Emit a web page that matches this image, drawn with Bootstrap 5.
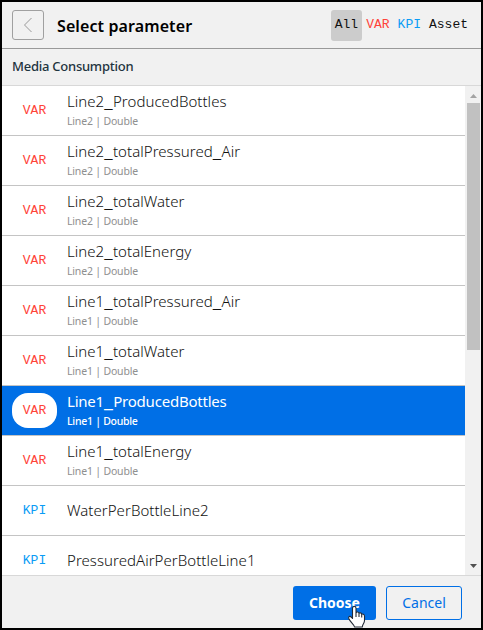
<!DOCTYPE html>
<html lang="en">
<head>
<meta charset="utf-8">
<meta name="viewport" content="width=device-width, initial-scale=1">
<title>Select parameter</title>
<link href="https://cdn.jsdelivr.net/npm/bootstrap@5.3.0/dist/css/bootstrap.min.css" rel="stylesheet">
<style>
body{font-family:"Noto Sans","Open Sans",sans-serif;font-size:14px;color:#333}
.dialog{width:483px;height:630px;border:2px solid #000;background:#f1f1f1}
.dialog-head{height:47px;border-bottom:1px solid #999;padding:0 9px 0 10px}
.back-btn{width:32px;height:30px;border:1px solid #a0a0a0;border-radius:3px;background:transparent}
.dialog-title{font-size:16px;font-weight:600;color:#000;margin:0 0 0 13px;padding-top:2px;line-height:22px;letter-spacing:.1px}
.mono{font-family:"Courier New","Liberation Mono",monospace;font-size:13px;line-height:16px}
.filter-btn{border:0;background:transparent;height:31px;padding:0 4px;border-radius:3px}
.filter-btn.current{background:#ccc}
.c-var{color:#ff4338}.c-kpi{color:#0a9cf5}.c-asset{color:#111}
.group-head{height:37px;border-bottom:1px solid #d8d8d8;padding-left:10px;font-size:13px;font-weight:500;color:#1e3440;letter-spacing:-.25px}
.list-wrap{height:489px}
.param{height:50px;border-bottom:1px solid #c4c4c4;padding-left:10px}
.tag{width:45px;height:35px;border-radius:16px}
.param-text{margin-left:10px;padding-bottom:3px}
.param-text.solo{padding-bottom:2px}
.param-name{font-size:15px;line-height:20px;font-weight:300;color:#111;letter-spacing:.04px}
.param-name i{font-style:normal;font-size:20px;line-height:0;letter-spacing:.4px}
.param-sub{font-size:10.5px;line-height:14px;color:#8f8f8f;margin-top:3px;letter-spacing:-.18px}
.param.selected{background:#006fe6}
.selected .tag{background:#fff}
.selected .param-name,.selected .param-sub{color:#fff;font-weight:400}
.selected .param-name{letter-spacing:-.22px}
.selected .param-sub{font-weight:500;letter-spacing:-.27px}
.scroll-track{width:16px;background:#f1f1f1;padding:8px 1px 7px 2px}
.thumb{height:247px;background:#c1c1c1;margin-top:5px}
.dialog-foot{height:53px;border-top:1px solid #d8d8d8;padding:1px 19px 0 0;gap:10px}
.dialog-foot .btn{height:34px;border-radius:3px;font-size:14px;padding:0;line-height:32px}
.btn-choose{width:83px;background:#006fe6;color:#fff;font-weight:700}
.btn-cancel{width:76px;border-color:#006fe6;color:#006fe6}
.cursor{left:345px;top:603px}
</style>
<script src="https://cdn.jsdelivr.net/npm/bootstrap@5.3.0/dist/js/bootstrap.bundle.min.js"></script>
</head>
<body class="overflow-hidden">
<div class="dialog d-flex flex-column position-relative">
<header class="dialog-head d-flex align-items-center">
<button class="back-btn d-flex align-items-center justify-content-center p-0" aria-label="Back"><svg width="10" height="16" fill="none" stroke="#999"><path d="M8.500 1 1.500 8l7 7"/></svg></button>
<h1 class="dialog-title">Select parameter</h1>
<nav class="d-flex ms-auto">
<button class="filter-btn mono c-asset current">All</button>
<button class="filter-btn mono c-var">VAR</button>
<button class="filter-btn mono c-kpi">KPI</button>
<button class="filter-btn mono c-asset">Asset</button>
</nav>
</header>
<div class="group-head d-flex align-items-center"><span>Media Consumption</span></div>
<main class="list-wrap d-flex bg-white overflow-hidden">
<div class="flex-grow-1">
<div class="param d-flex align-items-center"><span class="tag mono c-var d-flex align-items-center justify-content-center">VAR</span><div class="param-text"><div class="param-name">Line2<i>_</i>ProducedBottles</div><div class="param-sub">Line2 | Double</div></div></div>
<div class="param d-flex align-items-center"><span class="tag mono c-var d-flex align-items-center justify-content-center">VAR</span><div class="param-text"><div class="param-name">Line2<i>_</i>totalPressured<i>_</i>Air</div><div class="param-sub">Line2 | Double</div></div></div>
<div class="param d-flex align-items-center"><span class="tag mono c-var d-flex align-items-center justify-content-center">VAR</span><div class="param-text"><div class="param-name">Line2<i>_</i>totalWater</div><div class="param-sub">Line2 | Double</div></div></div>
<div class="param d-flex align-items-center"><span class="tag mono c-var d-flex align-items-center justify-content-center">VAR</span><div class="param-text"><div class="param-name">Line2<i>_</i>totalEnergy</div><div class="param-sub">Line2 | Double</div></div></div>
<div class="param d-flex align-items-center"><span class="tag mono c-var d-flex align-items-center justify-content-center">VAR</span><div class="param-text"><div class="param-name">Line1<i>_</i>totalPressured<i>_</i>Air</div><div class="param-sub">Line1 | Double</div></div></div>
<div class="param d-flex align-items-center"><span class="tag mono c-var d-flex align-items-center justify-content-center">VAR</span><div class="param-text"><div class="param-name">Line1<i>_</i>totalWater</div><div class="param-sub">Line1 | Double</div></div></div>
<div class="param selected d-flex align-items-center"><span class="tag mono c-var d-flex align-items-center justify-content-center">VAR</span><div class="param-text"><div class="param-name">Line1<i>_</i>ProducedBottles</div><div class="param-sub">Line1 | Double</div></div></div>
<div class="param d-flex align-items-center"><span class="tag mono c-var d-flex align-items-center justify-content-center">VAR</span><div class="param-text"><div class="param-name">Line1<i>_</i>totalEnergy</div><div class="param-sub">Line1 | Double</div></div></div>
<div class="param d-flex align-items-center"><span class="tag mono c-kpi d-flex align-items-center justify-content-center">KPI</span><div class="param-text solo"><div class="param-name">WaterPerBottleLine2</div></div></div>
<div class="param d-flex align-items-center"><span class="tag mono c-kpi d-flex align-items-center justify-content-center">KPI</span><div class="param-text solo"><div class="param-name">PressuredAirPerBottleLine1</div></div></div>
</div>
<div class="scroll-track d-flex flex-column">
<svg class="d-block mx-auto flex-shrink-0" width="7" height="4" fill="#a3a3a3"><path d="M3.500 0 7 4H0z"/></svg>
<div class="thumb flex-shrink-0"></div>
<svg class="d-block mx-auto mt-auto flex-shrink-0" width="7" height="4" fill="#505050"><path d="M0 0h7L3.500 4z"/></svg>
</div>
</main>
<footer class="dialog-foot d-flex align-items-center justify-content-end mt-auto">
<button class="btn btn-choose">Choose</button>
<button class="btn btn-cancel">Cancel</button>
</footer>
<svg class="cursor position-absolute" width="20" height="23" viewBox="0 0 20 23" fill="#fff" stroke="#222a36" stroke-width="1.100" stroke-linejoin="round"><path d="M5.500 13.500V3.200c0-2.500 3.500-2.500 3.500 0V8c.5-1.500 3-1.200 3 .5.5-1.200 2.700-.8 2.700 1 .8-1 2.800-.3 2.800 1.500v4.500c0 3-2 3.500-2.200 6.500H7.500c-.4-3-4.200-4.500-5.700-8.500-.8-2.300 1.500-2.700 2.500-1.300zM9 8v4M12 8.500V12M14.700 9.500v3"/></svg>
</div>
</body>
</html>
